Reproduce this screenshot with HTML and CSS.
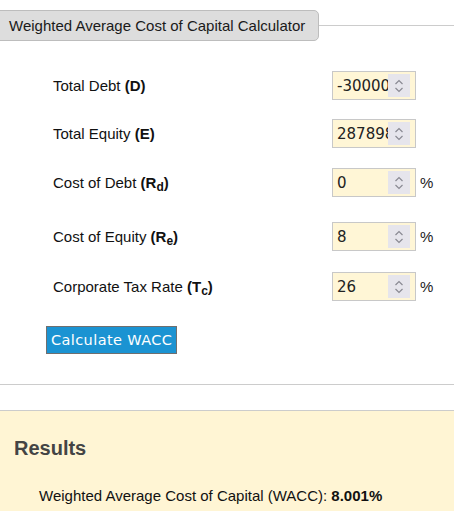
FILE: index.html
```html
<!DOCTYPE html>
<html>
<head>
<meta charset="utf-8">
<link rel="stylesheet" href="styles.css">
</head>
<body>
<div class="header">
  <div class="tab">Weighted Average Cost of Capital Calculator</div>
  <div class="rule"></div>
</div>
<div class="form">
  <div class="row r1">
    <div class="label">Total Debt <b>(D)</b></div>
    <div class="field"><input class="num" type="text" value="-30000"><span class="spin"><svg width="10" height="16" viewBox="0 0 10 16"><path d="M1.5 6 L5 2.5 L8.5 6 M1.5 10 L5 13.5 L8.5 10" fill="none" stroke="#8a8a93" stroke-width="1.2"/></svg></span></div>
  </div>
  <div class="row r2">
    <div class="label">Total Equity <b>(E)</b></div>
    <div class="field"><input class="num" type="text" value="287898"><span class="spin"><svg width="10" height="16" viewBox="0 0 10 16"><path d="M1.5 6 L5 2.5 L8.5 6 M1.5 10 L5 13.5 L8.5 10" fill="none" stroke="#8a8a93" stroke-width="1.2"/></svg></span></div>
  </div>
  <div class="row r3">
    <div class="label">Cost of Debt <b>(R<sub>d</sub>)</b></div>
    <div class="field"><input class="num" type="text" value="0"><span class="spin"><svg width="10" height="16" viewBox="0 0 10 16"><path d="M1.5 6 L5 2.5 L8.5 6 M1.5 10 L5 13.5 L8.5 10" fill="none" stroke="#8a8a93" stroke-width="1.2"/></svg></span></div><span class="pct">%</span>
  </div>
  <div class="row r4">
    <div class="label">Cost of Equity <b>(R<sub>e</sub>)</b></div>
    <div class="field"><input class="num" type="text" value="8"><span class="spin"><svg width="10" height="16" viewBox="0 0 10 16"><path d="M1.5 6 L5 2.5 L8.5 6 M1.5 10 L5 13.5 L8.5 10" fill="none" stroke="#8a8a93" stroke-width="1.2"/></svg></span></div><span class="pct">%</span>
  </div>
  <div class="row r5">
    <div class="label">Corporate Tax Rate <b>(T<sub>c</sub>)</b></div>
    <div class="field"><input class="num" type="text" value="26"><span class="spin"><svg width="10" height="16" viewBox="0 0 10 16"><path d="M1.5 6 L5 2.5 L8.5 6 M1.5 10 L5 13.5 L8.5 10" fill="none" stroke="#8a8a93" stroke-width="1.2"/></svg></span></div><span class="pct">%</span>
  </div>
  <button class="calc">Calculate WACC</button>
</div>
<hr class="sep">
<div class="results">
  <h2>Results</h2>
  <p class="line">Weighted Average Cost of Capital (WACC): <b>8.001%</b></p>
</div>
</body>
</html>
```
FILE: styles.css
```css
html, body {
  margin: 0;
  padding: 0;
  background: #fff;
  font-family: "Liberation Sans", Arial, sans-serif;
  color: #222;
}
.header {
  display: flex;
  align-items: center;
  padding-top: 10px;
}
.tab {
  margin-left: -6px;
  background: #dddddd;
  border: 1px solid #bdbdbd;
  border-radius: 0 5px 5px 0;
  font-size: 15px;
  height: 29px;
  line-height: 29px;
  padding: 0 13px 0 14px;
  color: #1a1a1a;
}
.rule {
  flex: 1;
  height: 1px;
  background: #cccccc;
}
.form {
  padding: 30px 0 0 53px;
  display: flex;
  flex-direction: column;
}
.row {
  display: flex;
  align-items: center;
  height: 29px;
}
.r1 { margin-top: 0; }
.r2 { margin-top: 19px; }
.r3 { margin-top: 20px; }
.r4 { margin-top: 25px; }
.r5 { margin-top: 21px; }
.label {
  width: 279px;
  font-size: 15px;
  color: #111;
}
sub {
  font-size: 12px;
  vertical-align: -3px;
  line-height: 0;
}
.field {
  box-sizing: border-box;
  width: 84px;
  height: 29px;
  border: 1px solid #c8c8c8;
  background: #fff6d6;
  display: flex;
  align-items: center;
  padding: 2px 5px 2px 4px;
}
.num {
  flex: 1;
  min-width: 0;
  width: 0;
  height: 100%;
  border: 0;
  background: transparent;
  font-family: "DejaVu Sans", sans-serif;
  font-size: 15px;
  color: #222;
  padding: 0;
  margin: 0;
  outline: none;
}
.spin {
  width: 22px;
  height: 23px;
  background: #e6e5ec;
  display: flex;
  align-items: center;
  justify-content: center;
}
.pct {
  margin-left: 4px;
  font-size: 15px;
  color: #222;
}
.calc {
  align-self: flex-start;
  margin: 25px 0 0 -7px;
  background: #1b93d2;
  border: 1px solid #6f6f6f;
  color: #fff;
  font-family: "DejaVu Sans", sans-serif;
  font-size: 14.5px;
  letter-spacing: 0.4px;
  height: 28px;
  padding: 0 4px;
  border-radius: 0;
}
.sep {
  border: 0;
  border-top: 1px solid #cccccc;
  margin: 30px 0 0 0;
  height: 0;
}
.results {
  margin-top: 25px;
  border-top: 1px solid #cccccc;
  background: #fff5d4;
  padding: 26px 14px 8px 14px;
}
.results h2 {
  margin: 0;
  font-size: 20px;
  color: #444;
  font-weight: bold;
}
.line {
  margin: 27px 0 0 25px;
  font-size: 15px;
  color: #111;
}
```
